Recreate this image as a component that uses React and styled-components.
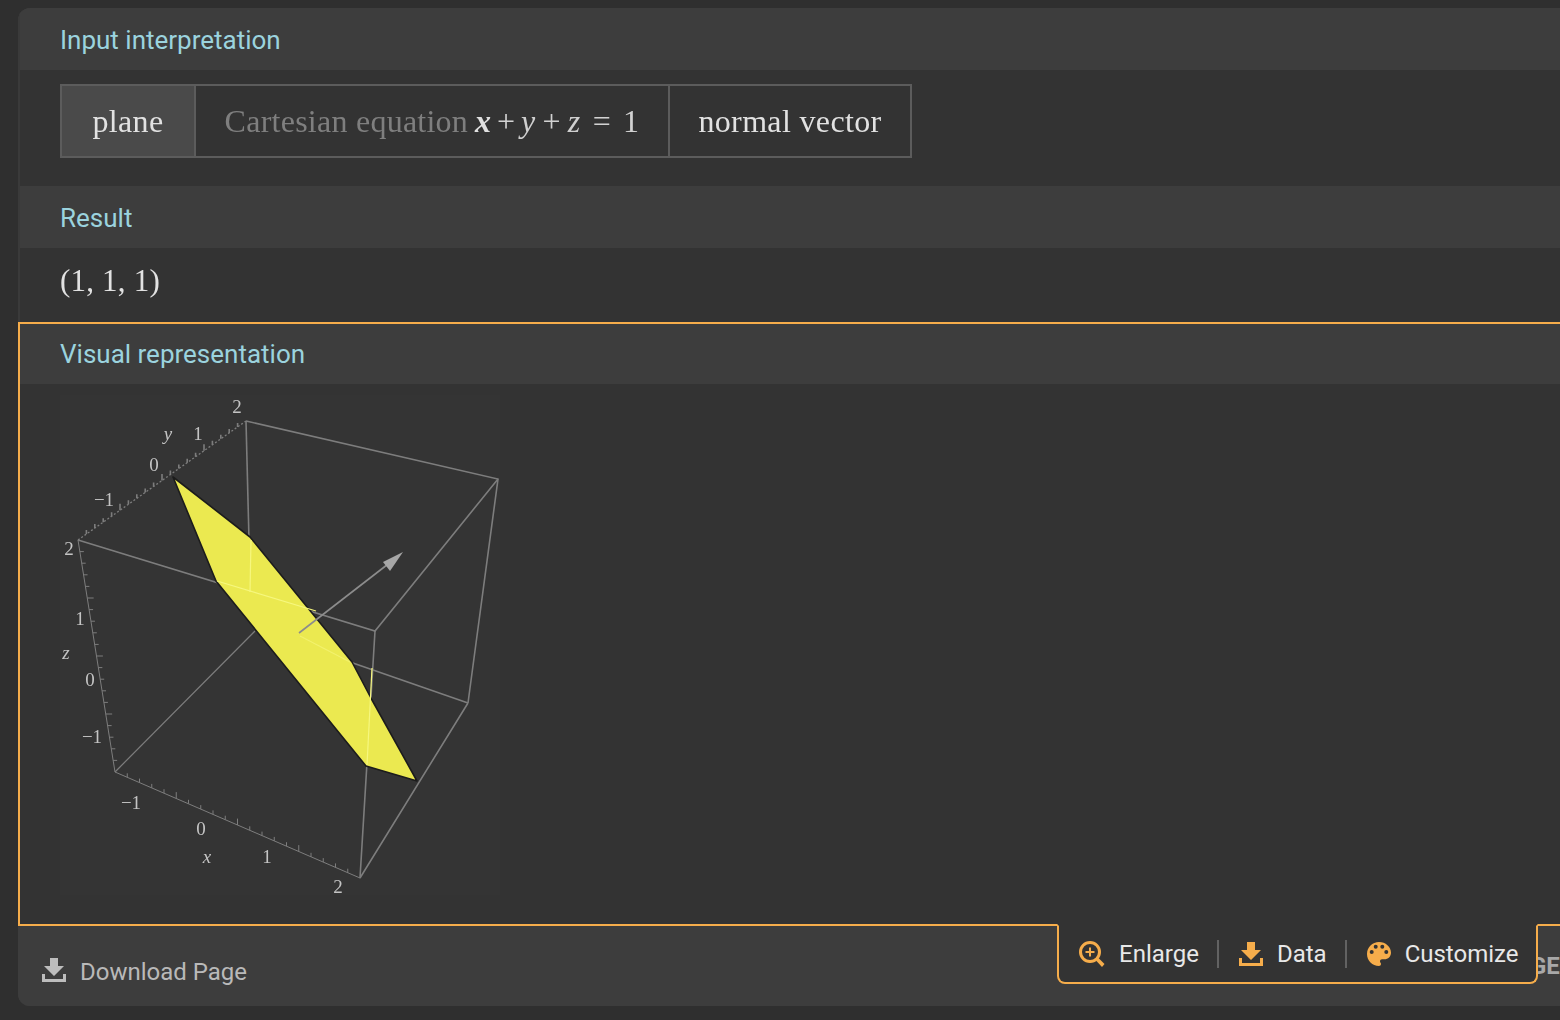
import React from "react"
import styled, { createGlobalStyle } from 'styled-components';

const accent = '#f6ad4b';
const line = '#7d7d7d';

const GlobalStyle = createGlobalStyle`
    html, body {
        margin: 0;
        height: 1020px;
        overflow: hidden;
        background: #2f2f2f;
    }
    #root {
        height: 1020px;
    }
`;

const Page = styled.div`
    width: 1560px;
    height: 1020px;
    box-sizing: border-box;
    padding: 8px 0 14px 18px;
    overflow: hidden;
`;

const Card = styled.main`
    display: flex;
    flex-direction: column;
    height: 998px;
    background: #3d3d3d;
    border-radius: 12px 0 0 12px;
    overflow: hidden;
`;

const Pod = styled.section`
    box-sizing: border-box;
    border-style: solid;
    border-color: ${(props) => (props.selected ? accent : '#3a3a3a')};
    border-width: ${(props) => (props.selected ? '2px 0 2px 2px' : '0 0 0 2px')};
`;

const PodTitle = styled.h2`
    display: flex;
    align-items: center;
    box-sizing: border-box;
    height: ${(props) => props.height}px;
    margin: 0;
    padding: ${(props) => props.top}px 0 0 40px;
    background: #3d3d3d;
    color: #9bd3de;
    font: 400 26px/1 Roboto, sans-serif;
`;

const PodBody = styled.div`
    box-sizing: border-box;
    height: ${(props) => props.height}px;
    padding: ${(props) => props.pad};
    background: #333333;
`;

const Interpretation = styled.div`
    display: inline-flex;
    height: 74px;
    box-sizing: border-box;
    border: 2px solid #5c5c5c;
    filter: blur(0.45px);
`;

const Cell = styled.div`
    display: flex;
    align-items: center;
    justify-content: center;
    box-sizing: border-box;
    width: ${(props) => props.width}px;
    background: ${(props) => (props.active ? '#4a4a4a' : 'transparent')};
    border-right: ${(props) => (props.last ? 'none' : '2px solid #5c5c5c')};
    color: #e2e2e2;
    font: 400 32px/1 "Liberation Serif", serif;
    letter-spacing: 0.35px;
    white-space: pre;
`;

const Muted = styled.span`
    margin-right: 7px;
    color: #7f7f7f;
    letter-spacing: 0.25px;
`;

const MathVar = styled.i`
    font-weight: ${(props) => (props.strong ? 700 : 400)};
    color: ${(props) => (props.strong ? '#e0e0e0' : '#cfcfcf')};
`;

const MathOp = styled.span`
    margin: 0 ${(props) => props.gap}px;
    color: #d2d2d2;
`;

const ResultText = styled.div`
    margin-top: -1px;
    color: #e2e2e2;
    font: 400 31px/1 "Liberation Serif", serif;
    letter-spacing: 0.2px;
    filter: blur(0.45px);
`;

const Plot = styled.svg`
    display: block;
    filter: blur(0.55px);
`;

const PlotLabel = styled.text`
    fill: #c4c4c4;
    font-family: "Liberation Serif", serif;
    font-size: 19px;
    font-style: ${(props) => (props.italic ? 'italic' : 'normal')};
    text-anchor: middle;
`;

const Footer = styled.footer`
    position: relative;
    display: flex;
    align-items: center;
    flex: 1;
    padding: 12px 0 0 24px;
    background: #3d3d3d;
`;

const DownloadLink = styled.a`
    display: flex;
    align-items: center;
    gap: 14px;
    color: #b9b9b9;
    font: 400 24px/1 Roboto, sans-serif;
    svg {
        margin-bottom: 4px;
    }
`;

const ClippedLabel = styled.span`
    position: absolute;
    left: 1512px;
    top: 28px;
    color: #a8a8a8;
    font: 700 24px/1 Roboto, sans-serif;
`;

const Toolbar = styled.div`
    position: absolute;
    top: -2px;
    left: 1039px;
    z-index: 1;
    display: flex;
    align-items: center;
    box-sizing: border-box;
    width: 481px;
    height: 60px;
    padding: 0 0 0 20px;
    background: #333333;
    border: 2px solid ${accent};
    border-top: 2px solid #333333;
    border-radius: 0 0 8px 8px;
`;

const ToolButton = styled.button`
    display: flex;
    flex-shrink: 0;
    align-items: center;
    gap: 14px;
    padding: 0;
    border: 0;
    background: none;
    color: #e8e8e8;
    font: 400 24px/1 Roboto, sans-serif;
    svg {
        display: block;
    }
`;

const Divider = styled.span`
    flex-shrink: 0;
    width: 2px;
    height: 28px;
    margin: 0 20px 0 18px;
    background: #626262;
`;

const DownloadIcon = ({ color }) => (
    <svg width="24" height="24" viewBox="0 0 24 24" fill={color}>
        <path d="M8 0h8v8h6L12 18 2 8h6z" />
        <path d="M0 16h3v5h18v-5h3v8H0z" />
    </svg>
);

const EnlargeIcon = () => (
    <svg width="26" height="26" viewBox="0 0 26 26">
        <circle cx="11" cy="11" r="9.5" fill="none" stroke={accent} strokeWidth="3" />
        <path d="M11 6.5v9M6.5 11h9" stroke={accent} strokeWidth="2" />
        <path d="M17 19.5l2.5-2.5 6 6-2.5 3z" fill={accent} />
    </svg>
);

const PaletteIcon = () => (
    <svg width="24" height="24" viewBox="0 0 24 24" fill={accent}>
        <path
            fillRule="evenodd"
            d="M12 0C5.4 0 0 5.4 0 12s5.4 12 12 12c1.1 0 2-.9 2-2 0-.5-.2-1-.5-1.3-.3-.4-.5-.8-.5-1.4 0-1.100.9-2 2-2h2.400c3.700 0 6.600-3 6.600-6.600C24 4.800 18.600 0 12 0zM4.700 12a2 2 0 1 0 0-4 2 2 0 0 0 0 4zm4-5.300a2 2 0 1 0 0-4 2 2 0 0 0 0 4zm6.600 0a2 2 0 1 0 0-4 2 2 0 0 0 0 4zm4 5.300a2 2 0 1 0 0-4 2 2 0 0 0 0 4z"
        />
    </svg>
);

const labels = [
    ['2', 237, 413], ['y', 168, 440, true], ['1', 198, 440], ['0', 154, 471],
    ['\u22121', 104, 506], ['2', 69, 555], ['1', 80, 625], ['z', 66, 659, true],
    ['0', 90, 686], ['\u22121', 92, 743], ['\u22121', 131, 809], ['0', 201, 835],
    ['x', 207, 863, true], ['1', 267, 863], ['2', 338, 893],
];

// tick marks along an axis, every 5th one is longer
const ticks = (x1, y1, x2, y2, count, dx, dy) => {
    const out = [];
    for (let i = 1; i < count; i++) {
        const x = x1 + ((x2 - x1) * i) / count;
        const y = y1 + ((y2 - y1) * i) / count;
        const len = i % 5 === 0 ? 1.6 : 1;
        out.push(`M${x} ${y}l${dx * len} ${dy * len}`);
    }
    return out.join('');
};

const PlaneGraphic = () => (
    <Plot width="440" height="510" viewBox="60 395 440 510">
        <rect x="60" y="395" width="440" height="500" fill="#343434" />
        <g fill="none" stroke={line} strokeWidth="1.6">
            <path d="M246 421L498 479L468 703" />
            <path d="M246 421L249 540" />
            <path d="M498 479L375 631L78 540" />
            <path d="M375 631L360 878L468 703" />
            <path d="M115 772L255 631" strokeWidth="1.2" />
            <path d="M350 662L468 703" />
        </g>
        <g fill="none" stroke={line}>
            <path d="M78 540L246 421" strokeDasharray="2 2" strokeWidth="1.3" />
            <path d="M78 540L115 772" />
            <path d="M115 772L360 878" />
            <path d={ticks(78, 540, 246, 421, 20, 0, -4)} strokeWidth="1.6" />
            <path d={ticks(78, 540, 115, 772, 20, 4, 0)} />
            <path d={ticks(115, 772, 360, 878, 20, 0, -4)} />
        </g>
        <path
            d="M173 477L250 537L352 662L372 700L417 781L366 766L216 581Z"
            fill="#ebe950"
            stroke="#1c1c1c"
            strokeWidth="1.6"
            strokeLinejoin="round"
        />
        <g fill="none" stroke="#f6f77e" strokeWidth="1.2">
            <path d="M217 581L316 611" />
            <path d="M251 540L250 592" />
            <path d="M372 668L367 765" />
            <path d="M300 636L350 662" strokeOpacity="0.6" />
        </g>
        <path d="M299 633L392 561" fill="none" stroke="#8c8c8c" strokeWidth="1.6" />
        <path d="M403 552L383 562L390 571Z" fill="#a6a6a6" />
        {labels.map(([text, x, y, italic], i) => (
            <PlotLabel key={`label-` + i} x={x} y={y} italic={italic}>{text}</PlotLabel>
        ))}
    </Plot>
);

const App = () => (
    <Page>
        <GlobalStyle />
        <Card>
            <Pod>
                <PodTitle height={62} top={2}>Input interpretation</PodTitle>
                <PodBody height={116} pad="14px 0 0 40px">
                    <Interpretation>
                        <Cell width={134} active>plane</Cell>
                        <Cell width={474}>
                            <Muted>Cartesian equation</Muted>
                            <MathVar strong>x</MathVar><MathOp gap={5.5}>+</MathOp>
                            <MathVar>y</MathVar><MathOp gap={7}>+</MathOp>
                            <MathVar>z</MathVar><MathOp gap={12}>=</MathOp>
                            <MathOp gap={0}>1</MathOp>
                        </Cell>
                        <Cell width={240} last>normal vector</Cell>
                    </Interpretation>
                </PodBody>
            </Pod>
            <Pod>
                <PodTitle height={62} top={2}>Result</PodTitle>
                <PodBody height={74} pad="18px 0 0 40px">
                    <ResultText>(1, 1, 1)</ResultText>
                </PodBody>
            </Pod>
            <Pod selected>
                <PodTitle height={60} top={0}>Visual representation</PodTitle>
                <PodBody height={540} pad="11px 0 0 40px">
                    <PlaneGraphic />
                </PodBody>
            </Pod>
            <Footer>
                <DownloadLink>
                    <DownloadIcon color="#bdbdbd" />
                    Download Page
                </DownloadLink>
                <ClippedLabel>GE</ClippedLabel>
                <Toolbar>
                    <ToolButton><EnlargeIcon />Enlarge</ToolButton>
                    <Divider />
                    <ToolButton><DownloadIcon color={accent} />Data</ToolButton>
                    <Divider />
                    <ToolButton><PaletteIcon />Customize</ToolButton>
                </Toolbar>
            </Footer>
        </Card>
    </Page>
);

export default App;
